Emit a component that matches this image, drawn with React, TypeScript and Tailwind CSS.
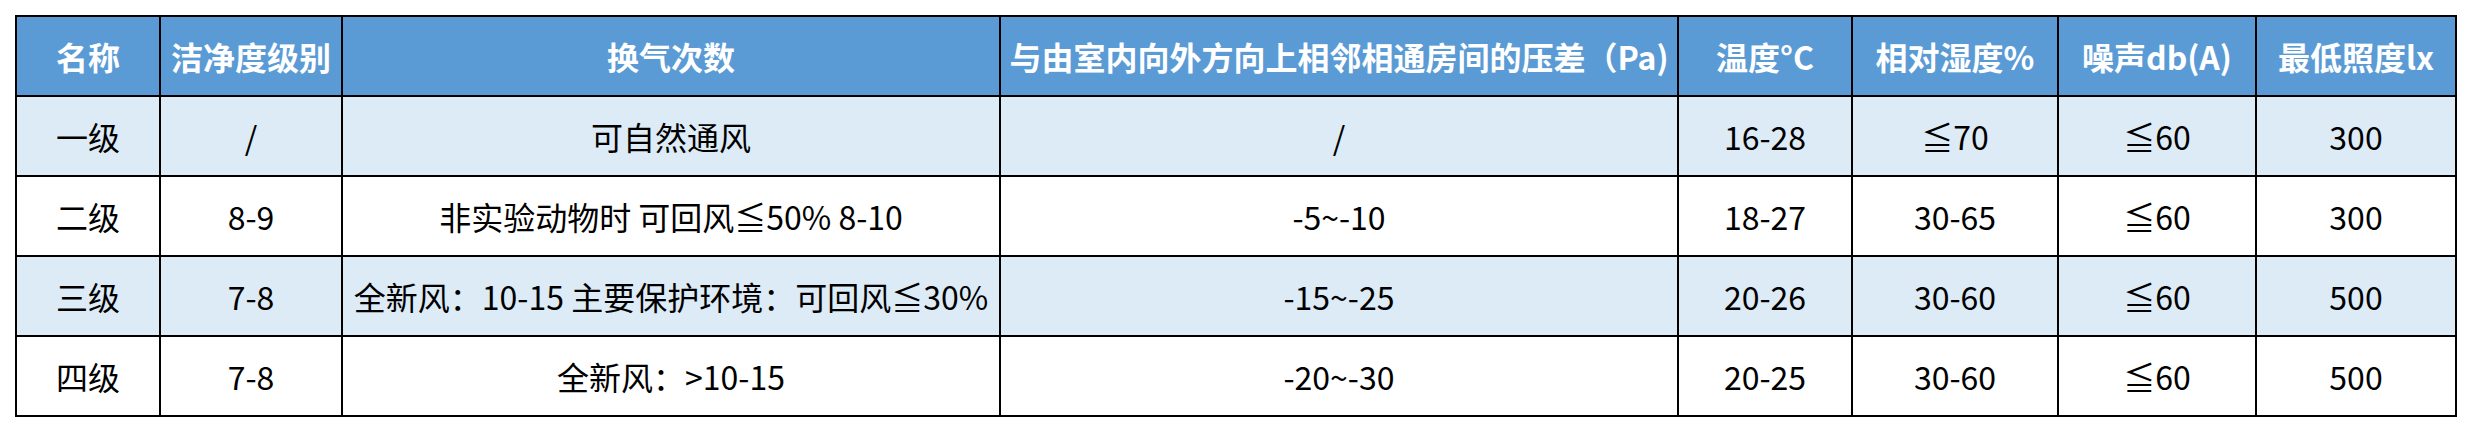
const headers = [
  "名称",
  "洁净度级别",
  "换气次数",
  "与由室内向外方向上相邻相通房间的压差（Pa)",
  "温度°C",
  "相对湿度%",
  "噪声db(A)",
  "最低照度lx",
];

const rows: string[][] = [
  ["一级", "/", "可自然通风", "/", "16-28", "≦70", "≦60", "300"],
  ["二级", "8-9", "非实验动物时 可回风≦50% 8-10", "-5~-10", "18-27", "30-65", "≦60", "300"],
  ["三级", "7-8", "全新风：10-15 主要保护环境：可回风≦30%", "-15~-25", "20-26", "30-60", "≦60", "500"],
  ["四级", "7-8", "全新风：>10-15", "-20~-30", "20-25", "30-60", "≦60", "500"],
];

function Cell({ text, head, shaded }: { text: string; head?: boolean; shaded?: boolean }) {
  return (
    <div
      className={
        "flex h-[80px] items-center justify-center overflow-visible whitespace-nowrap border-b-2 border-r-2 border-black text-[32px] leading-none " +
        (head
          ? "bg-[#5b9bd5] font-bold text-white"
          : shaded
            ? "bg-[#ddebf7] text-black"
            : "bg-white text-black")
      }
    >
      {text}
    </div>
  );
}

export default function App() {
  return (
    <div className="h-[432px] w-[2472px] bg-white pl-[15px] pt-[15px] [font-family:'Noto_Sans_CJK_SC','Noto_Sans',sans-serif]">
      <div className="grid w-[2442px] grid-cols-[144px_182px_658px_678px_174px_206px_198px_200px] border-l-2 border-t-2 border-black">
        {headers.map((h) => (
          <Cell key={h} text={h} head />
        ))}
        {rows.map((r, i) =>
          r.map((c, j) => <Cell key={`${i}-${j}`} text={c} shaded={i % 2 === 0} />)
        )}
      </div>
    </div>
  );
}
